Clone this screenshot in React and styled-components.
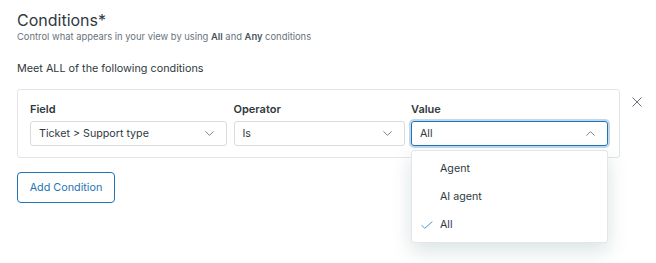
import styled, { createGlobalStyle } from 'styled-components'

const GlobalStyle = createGlobalStyle`
  html, body { margin: 0; padding: 0; background: #fff; }
  body {
    font-family: Inter, "Liberation Sans", sans-serif;
    color: #2f3941;
    -webkit-font-smoothing: antialiased;
  }
`

const fields = [
  { label: 'Field', value: 'Ticket > Support type' },
  { label: 'Operator', value: 'Is' },
  { label: 'Value', value: 'All', open: true }
]

const options = [
  { name: 'Agent' },
  { name: 'AI agent' },
  { name: 'All', checked: true }
]

const Chevron = ({ up }) => (
  <svg width="9" height="5" viewBox="0 0 9 5" fill="none">
    <path d={up ? 'M0.5 4.6L4.5 0.6L8.5 4.6' : 'M0.5 0.4L4.5 4.4L8.5 0.4'} stroke="#68737d" strokeWidth="0.9" />
  </svg>
)

const App = () => {
  return (
    <>
      <GlobalStyle />
      <Page>
        <Title>Conditions*</Title>
        <Hint>Control what appears in your view by using <b>All</b> and <b>Any</b> conditions</Hint>
        <Meet>Meet ALL of the following conditions</Meet>
        <Row>
          <Card>
            {fields.map((item, index) => (
              <FieldCol key={index}>
                <Label>{item.label}</Label>
                <Select $open={item.open}>
                  <span>{item.value}</span>
                  <Chevron up={item.open} />
                </Select>
                {item.open && (
                  <Menu>
                    {options.map((opt, i) => (
                      <Option key={i}>
                        <Check>
                          {opt.checked && (
                            <svg width="12" height="8" viewBox="0 0 12 8" fill="none">
                              <path d="M0.6 4.2L3.8 7.3L11.4 0.5" stroke="#5293c7" strokeWidth="1" />
                            </svg>
                          )}
                        </Check>
                        {opt.name}
                      </Option>
                    ))}
                  </Menu>
                )}
              </FieldCol>
            ))}
          </Card>
          <Close aria-label="remove">
            <svg width="10" height="10" viewBox="0 0 10 10" fill="none">
              <path d="M0.5 0.5L9.5 9.5M9.5 0.5L0.5 9.5" stroke="#68737d" strokeWidth="1" />
            </svg>
          </Close>
        </Row>
        <AddButton>Add Condition</AddButton>
      </Page>
    </>
  )
}

const Page = styled.div`
  padding: 11px 17px 0;
  width: 656px;
  height: 263px;
  box-sizing: border-box;
`

const Title = styled.h2`
  margin: 0;
  font-size: 16px;
  font-weight: 400;
  line-height: 19px;
  color: #2f3941;
`

const Hint = styled.p`
  margin: 0;
  font-size: 9.4px;
  line-height: 13px;
  color: #68737d;

  b { font-weight: 600; color: #49545c; }
`

const Meet = styled.p`
  margin: 18px 0 0;
  font-size: 10.8px;
  line-height: 16px;
  color: #2f3941;
`

const Row = styled.div`
  display: flex;
  align-items: flex-start;
  margin-top: 12px;
`

const Card = styled.div`
  width: 603px;
  height: 69px;
  box-sizing: border-box;
  border: 1px solid #e3e6e8;
  border-radius: 3px;
  padding: 12px 11px 0 12px;
  display: grid;
  grid-template-columns: 197px 171px 197px;
  column-gap: 6.5px;
`

const FieldCol = styled.div`
  position: relative;
  display: flex;
  flex-direction: column;
`

const Label = styled.label`
  font-size: 11px;
  font-weight: 600;
  line-height: 14px;
  color: #2f3941;
  margin-bottom: 5px;
`

const Select = styled.div`
  height: 25px;
  box-sizing: border-box;
  display: flex;
  align-items: center;
  justify-content: space-between;
  padding: 0 12px 0 8px;
  border-radius: 3px;
  font-size: 10.7px;
  color: #2f3941;
  border: 1px solid ${({ $open }) => ($open ? '#1f73b7' : '#d8dcde')};
  box-shadow: ${({ $open }) => ($open ? '0 0 0 2px rgba(31, 115, 183, 0.28)' : 'none')};
`

const Menu = styled.ul`
  position: absolute;
  top: 48px;
  left: 0;
  right: 0;
  margin: 0;
  padding: 3px 0;
  list-style: none;
  background: #fff;
  border: 1px solid #e3e6e8;
  border-radius: 3px;
  box-shadow: 0 8px 20px rgba(4, 68, 77, 0.15);
  z-index: 2;
`

const Option = styled.li`
  height: 28.3px;
  display: flex;
  align-items: center;
  font-size: 10.7px;
  color: #2f3941;
`

const Check = styled.span`
  width: 19px;
  padding-left: 9px;
  display: flex;
  align-items: center;
`

const Close = styled.button`
  border: 0;
  background: none;
  padding: 0;
  margin: 8px 0 0 12px;
  width: 10px;
  height: 10px;
  display: flex;
`

const AddButton = styled.button`
  margin-top: 14px;
  height: 31px;
  width: 98px;
  padding: 0;
  border: 1px solid #1f73b7;
  border-radius: 4px;
  background: #fff;
  color: #1f73b7;
  font-family: inherit;
  font-size: 10.8px;
`

export default App
